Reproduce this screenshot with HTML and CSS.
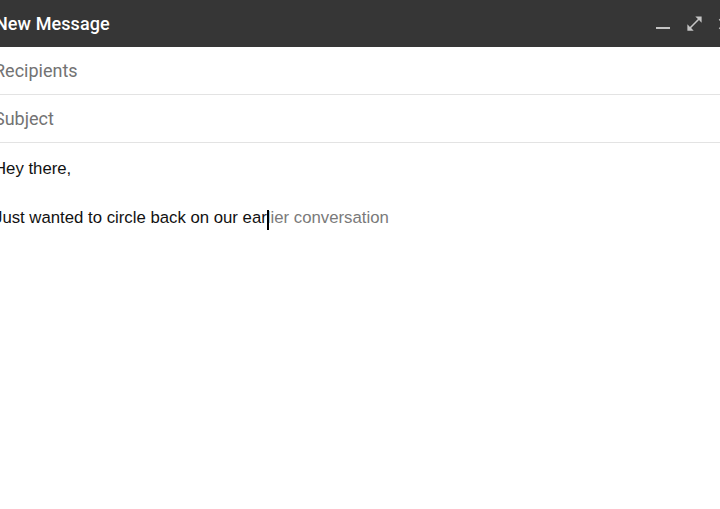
FILE: index.html
```html
<!DOCTYPE html>
<html>
<head>
<meta charset="utf-8">
<link rel="stylesheet" href="styles.css">
</head>
<body>
<div class="compose">
  <header class="bar">
    <div class="title">New Message</div>
    <div class="actions">
      <svg class="ic ic-min" viewBox="0 0 14 14"><rect x="0" y="10" width="14" height="2" fill="currentColor"/></svg>
      <svg class="ic ic-exp" viewBox="0 0 24 24"><path fill="currentColor" d="M21 11V3h-8l3.29 3.29-10 10L3 13v8h8l-3.29-3.29 10-10z"/></svg>
      <svg class="ic ic-close" viewBox="0 0 24 24"><path fill="currentColor" d="M19 6.41L17.59 5 12 10.59 6.41 5 5 6.41 10.59 12 5 17.59 6.41 19 12 13.41 17.59 19 19 17.59 13.41 12z"/></svg>
    </div>
  </header>
  <div class="field">Recipients</div>
  <div class="field">Subject</div>
  <div class="body">
    <p class="line">Hey there,</p>
    <p class="line">&nbsp;</p>
    <p class="line">Just wanted to circle back on our ear<span class="hint"><span class="caret-l">l</span>ier conversation</span></p>
  </div>
</div>
</body>
</html>
```
FILE: styles.css
```css
html, body {
  margin: 0;
  padding: 0;
  background: #ffffff;
  overflow: hidden;
}
.compose {
  margin-left: -6px;
  width: 752px;
}
.bar {
  height: 47px;
  background: #363636;
  display: flex;
  align-items: center;
  padding-left: 1px;
  padding-right: 13px;
}
.title {
  flex: 1;
  color: #ffffff;
  font-family: Roboto, "Noto Sans", sans-serif;
  font-weight: 500;
  font-size: 18px;
  letter-spacing: 0.1px;
}
.actions {
  display: flex;
  align-items: center;
  color: #c4c4c4;
}
.ic {
  display: block;
}
.ic-min {
  width: 14px;
  height: 14px;
  margin-top: 1px;
  margin-right: 15px;
}
.ic-exp {
  width: 19px;
  height: 19px;
  margin-right: 11px;
}
.ic-close {
  width: 18px;
  height: 18px;
}
.field {
  height: 47px;
  border-bottom: 1px solid #e3e3e3;
  display: flex;
  align-items: center;
  font-family: Roboto, "Noto Sans", sans-serif;
  font-size: 18px;
  color: #737373;
}
.body {
  padding-top: 14px;
  font-family: "Liberation Sans", Arial, sans-serif;
  font-size: 16.75px;
  color: #111111;
}
.line {
  margin: 0;
  line-height: 24.5px;
}
.hint {
  color: #7a7a7a;
}
.caret-l {
  position: relative;
}
.caret-l::after {
  content: "";
  position: absolute;
  left: 0;
  top: 2px;
  width: 2px;
  height: 20px;
  background: #000000;
}
```
